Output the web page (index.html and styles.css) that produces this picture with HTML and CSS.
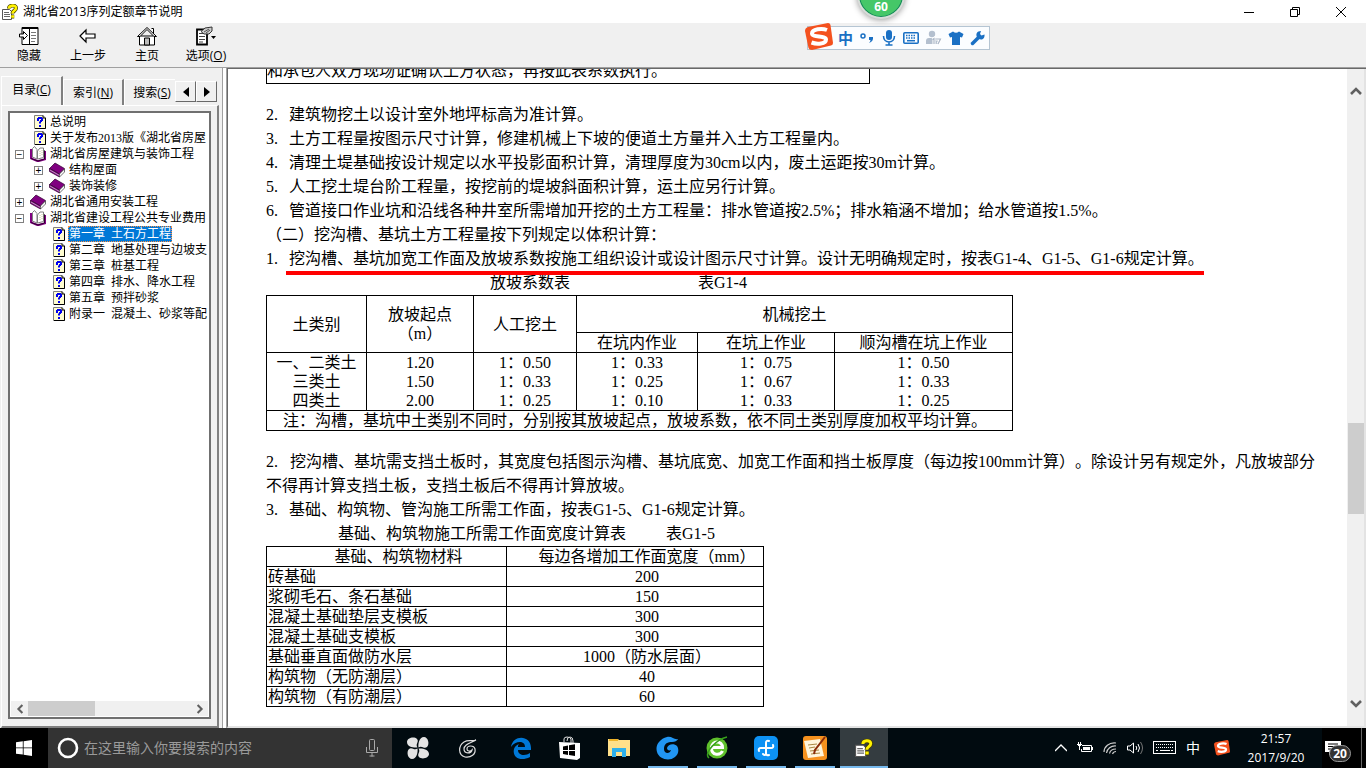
FILE: index.html
```html
<!DOCTYPE html>
<html lang="zh-CN">
<head>
<meta charset="utf-8">
<title>湖北省2013序列定额章节说明</title>
<link rel="stylesheet" href="styles.css">
</head>
<body>
<svg class="sprite" aria-hidden="true">
  <symbol id="topic" viewBox="0 0 12 16">
    <path d="M.5 1.500h8.500l2.500 2.500v10.500H.5z" fill="#fffdd0" stroke="#808080"/>
    <path d="M1 14.500h10.500V4H9V1.500" fill="none" stroke="#000"/>
    <path d="M3 4h2v3H3zM4 3h4v2H4zM7 4h2v3H7zM6 6h2v2H6zM5 7.500h2v2H5zM5 11h2v2H5z" fill="#0000f0"/>
  </symbol>
  <symbol id="book-open" viewBox="0 0 16 16">
    <path d="M0 3h2.500v9L8 14l6-1.500V5H16v9l-7 2H7l-7-3z" fill="#800080"/>
    <path d="M2.500 2.500L4.500.5 7 3.500V13L2.500 11z" fill="#fff" stroke="#808080"/>
    <path d="M7.500 13V5L10 2h3.500v9.500z" fill="#fff" stroke="#808080"/>
    <path d="M14.500 4v9L8 15 1 12.500" fill="none" stroke="#000" stroke-width=".6"/>
    <path d="M10 5v6M12 4v6" stroke="#cc9" stroke-dasharray="1 1"/>
  </symbol>
  <symbol id="book-closed" viewBox="0 0 16 16">
    <path d="M.5 6.500L6 1l9.500 5.500-5 5.500z" fill="#800080" stroke="#300030" stroke-width=".7"/>
    <path d="M.5 6.500v3l10 5.500V12z" fill="#800080" stroke="#300030" stroke-width=".7"/>
    <path d="M10.500 12l5-5v3l-5 5z" fill="#fff" stroke="#333" stroke-width=".7"/>
    <path d="M1 8l9.500 5.500" stroke="#ddd" stroke-width=".7" fill="none"/>
  </symbol>
  <symbol id="help-doc" viewBox="0 0 16 16">
    <path d="M.5 5.500h7l2 2v8h-9z" fill="#fff" stroke="#555"/>
    <path d="M2 8.500h5M2 10.500h6M2 12.500h6" stroke="#666"/>
    <path d="M7 4.500C7 1 14 .5 14 4c0 3-3.500 2.500-3.500 5.500M9.200 12.500h3" fill="none" stroke="#443d00" stroke-width="4"/>
    <path d="M7 4.500C7 1 14 .5 14 4c0 3-3.500 2.500-3.500 5.500M9.200 12.500h3" fill="none" stroke="#fff200" stroke-width="2.600"/>
  </symbol>
  <symbol id="sogou" viewBox="0 0 28 28">
    <path d="M3 4L23 0q2 0 2.500 2l2.500 18q0 2-2 2.500L7 27q-3 0-3.500-2L0 8q0-3 3-4z" fill="#f4511e"/>
    <path d="M22 7c-5-2-15-1-15 3.500 0 4 14 2 14 6 0 4.500-9 5-14.500 3" fill="none" stroke="#fff" stroke-width="4"/>
  </symbol>
  <symbol id="chev" viewBox="0 0 12 10"><path d="M1 8l5-5 5 5" fill="none" stroke="#606060" stroke-width="2.600"/></symbol>
</svg>

<header class="titlebar">
  <svg class="i16"><use href="#help-doc"/></svg>
  <h1>湖北省2013序列定额章节说明</h1>
  <div class="winctl">
    <button aria-label="最小化"><svg viewBox="0 0 10 10"><path d="M0 5.500h10" stroke="#000"/></svg></button>
    <button aria-label="还原"><svg viewBox="0 0 10 10"><path d="M.5 2.500h7v7h-7zM2.500 2.500v-2h7v7h-2" stroke="#000" fill="none"/></svg></button>
    <button aria-label="关闭"><svg viewBox="0 0 10 10"><path d="M0 0l10 10M10 0L0 10" stroke="#000"/></svg></button>
  </div>
</header>

<nav class="toolbar">
  <button>
    <svg class="tool-icon" viewBox="0 0 20 20"><path d="M3 1.500h16v17H3z" fill="#fff" stroke="#000"/><path d="M3 2.500h16M10.500 2v16" stroke="#000"/><path d="M12 6.500h5M12 9.500h5M12 12.500h5M12 15.500h4" stroke="#777"/><path d="M8.500 9.500l-4-4V8H.5v3h4v2.500z" fill="#fff" stroke="#000"/></svg>
    <span>隐藏</span>
  </button>
  <button>
    <svg class="tool-icon" viewBox="0 0 20 20"><path d="M2 10l6-6v4h9v4H8v4z" fill="#fff" stroke="#000" stroke-width="1.200"/></svg>
    <span>上一步</span>
  </button>
  <button>
    <svg class="tool-icon" viewBox="0 0 20 20"><path d="M2.500 10h15v9h-15zM14.500 2.500h2V8" fill="#fff" stroke="#000"/><path d="M.5 10.500L10 1.500l9.500 9H17l-7-7-7 7z" fill="#fff" stroke="#000"/><path d="M7.500 19v-7h5v7z" fill="#bbb" stroke="#000"/></svg>
    <span>主页</span>
  </button>
  <button>
    <svg class="tool-icon" viewBox="0 0 20 20"><path d="M1 3.500h10v15H1z" fill="#fff" stroke="#000" stroke-width="1.800"/><path d="M3 7.500h5M3 10.500h6M3 13.500h6M3 16h4" stroke="#444"/><path d="M5 5.500L9 2l7-1v4l-3 3H8z" fill="#ccc" stroke="#333"/><path d="M8 6l5-3M10 7l4-3" stroke="#333" stroke-width=".8"/><path d="M15 10h5l-2.500 3z" fill="#000"/></svg>
    <span>选项(<u>O</u>)</span>
  </button>
</nav>

<div class="ball">60</div>
<div class="ime">
  <svg class="ime-logo"><use href="#sogou"/></svg>
  <button>中</button>
  <button aria-label="标点"><svg viewBox="0 0 16 16"><circle cx="4" cy="6" r="2" fill="none" stroke="#1a70c4" stroke-width="1.500"/><path d="M10 7h4c.5 3-1 5-4 6 1-1 1.500-2 1.500-3H10z" fill="#1a70c4"/></svg></button>
  <button aria-label="语音"><svg viewBox="0 0 16 16"><rect x="5" y="0" width="6" height="10" rx="3" fill="#1a70c4"/><path d="M2.500 6c0 8 11 8 11 0M8 12v3M4.500 15h7" fill="none" stroke="#1a70c4" stroke-width="1.600"/></svg></button>
  <button aria-label="软键盘"><svg viewBox="0 0 16 16"><rect x=".8" y="2.800" width="14.400" height="10.400" rx="1" fill="none" stroke="#1a70c4" stroke-width="1.600"/><path d="M3 5.500h10M3 8h10" stroke="#1a70c4" stroke-width="1.500" stroke-dasharray="1.500 1"/><path d="M4 10.700h8" stroke="#1a70c4" stroke-width="1.500"/></svg></button>
  <button aria-label="账户"><svg viewBox="0 0 16 16"><circle cx="6" cy="4" r="3.200" fill="#b4c0cf"/><path d="M0 14V11q0-3 3-3h6q3 0 3 3v3z" fill="#b4c0cf"/><path d="M6.500 9.500L8 8.500V14M10 9h4.500L12 14" fill="none" stroke="#fff" stroke-width="3"/><path d="M6.500 9.500L8 8.500V14M10 9h4.500L12 14" fill="none" stroke="#aab6c6" stroke-width="1.200"/></svg></button>
  <button aria-label="皮肤"><svg viewBox="0 0 16 16"><path d="M5 1.500q3 2.500 6 0L15.500 4 14 7.500l-2-.5v8H4V7l-2 .5L.5 4z" fill="#1a70c4"/></svg></button>
  <button aria-label="工具"><svg viewBox="0 0 16 16"><path d="M2.500 13.500L9 7" stroke="#1a70c4" stroke-width="3.500" stroke-linecap="round"/><path d="M14.500 4.500l-3 1-1.500-1.500 1-3c-4 0-5.500 3-4 6l2 2c3 1.500 6-.5 5.500-4.500z" fill="#1a70c4"/></svg></button>
</div>

<main class="workspace">
  <aside class="side">
    <div class="tabs" role="tablist">
      <button role="tab" aria-selected="true" class="tab on">目录(<u>C</u>)</button>
      <button role="tab" class="tab">索引(<u>N</u>)</button>
      <button role="tab" class="tab last">搜索(<u>S</u>)</button>
      <button class="spin" aria-label="向左"><svg viewBox="0 0 6 10"><path d="M6 0v10L0 5z"/></svg></button>
      <button class="spin" aria-label="向右"><svg viewBox="0 0 6 10"><path d="M0 0v10l6-5z"/></svg></button>
    </div>
    <div class="sheet">
      <div class="treebox">
        <ul class="tree">
          <li class="leaf"><svg class="page"><use href="#topic"/></svg><a href="#t">总说明</a></li>
          <li class="leaf"><svg class="page"><use href="#topic"/></svg><a href="#t">关于发布2013版《湖北省房屋</a></li>
          <li><button class="exp" aria-label="折叠">−</button><svg class="i16"><use href="#book-open"/></svg><a href="#t">湖北省房屋建筑与装饰工程</a></li>
          <li class="sub"><button class="exp" aria-label="展开">+</button><svg class="i16"><use href="#book-closed"/></svg><a href="#t">结构屋面</a></li>
          <li class="sub"><button class="exp" aria-label="展开">+</button><svg class="i16"><use href="#book-closed"/></svg><a href="#t">装饰装修</a></li>
          <li><button class="exp" aria-label="展开">+</button><svg class="i16"><use href="#book-closed"/></svg><a href="#t">湖北省通用安装工程</a></li>
          <li><button class="exp" aria-label="折叠">−</button><svg class="i16"><use href="#book-open"/></svg><a href="#t">湖北省建设工程公共专业费用</a></li>
          <li class="sub leaf"><svg class="page"><use href="#topic"/></svg><a href="#t" class="sel">第一章&nbsp; 土石方工程</a></li>
          <li class="sub leaf"><svg class="page"><use href="#topic"/></svg><a href="#t">第二章&nbsp; 地基处理与边坡支</a></li>
          <li class="sub leaf"><svg class="page"><use href="#topic"/></svg><a href="#t">第三章&nbsp; 桩基工程</a></li>
          <li class="sub leaf"><svg class="page"><use href="#topic"/></svg><a href="#t">第四章&nbsp; 排水、降水工程</a></li>
          <li class="sub leaf"><svg class="page"><use href="#topic"/></svg><a href="#t">第五章&nbsp; 预拌砂浆</a></li>
          <li class="sub leaf"><svg class="page"><use href="#topic"/></svg><a href="#t">附录一&nbsp; 混凝土、砂浆等配</a></li>
        </ul>
        <div class="hbar">
          <button aria-label="向左滚动"><svg class="west"><use href="#chev"/></svg></button>
          <div class="track"><div class="thumb"></div></div>
          <button aria-label="向右滚动"><svg class="east"><use href="#chev"/></svg></button>
        </div>
      </div>
    </div>
  </aside>
  <div class="splitter"></div>
  <section class="view">
    <article class="doc">
      <table class="prev"><tr><td>和承包人双方现场证确认土方状态，再按此表系数执行。</td></tr></table>
      <p class="item"><span class="no">2.</span><span>建筑物挖土以设计室外地坪标高为准计算。</span></p>
      <p class="item"><span class="no">3.</span><span>土方工程量按图示尺寸计算，修建机械上下坡的便道土方量并入土方工程量内。</span></p>
      <p class="item"><span class="no">4.</span><span>清理土堤基础按设计规定以水平投影面积计算，清理厚度为30cm以内，废土运距按30m计算。</span></p>
      <p class="item"><span class="no">5.</span><span>人工挖土堤台阶工程量，按挖前的堤坡斜面积计算，运土应另行计算。</span></p>
      <p class="item"><span class="no">6.</span><span>管道接口作业坑和沿线各种井室所需增加开挖的土方工程量：排水管道按2.5%；排水箱涵不增加；给水管道按1.5%。</span></p>
      <p>（二）挖沟槽、基坑土方工程量按下列规定以体积计算：</p>
      <p class="item"><span class="no">1.</span><span class="marked">挖沟槽、基坑加宽工作面及放坡系数按施工组织设计或设计图示尺寸计算。设计无明确规定时，按表G1-4、G1-5、G1-6规定计算。</span></p>
      <p class="cap cap-a"><span>放坡系数表</span><span>表G1-4</span></p>
      <table class="grid slope">
        <colgroup><col class="a"><col class="b"><col class="c"><col class="d"><col class="e"><col class="f"></colgroup>
        <tr class="h1"><th rowspan="2">土类别</th><th rowspan="2">放坡起点<br>（m）</th><th rowspan="2">人工挖土</th><th colspan="3">机械挖土</th></tr>
        <tr><th>在坑内作业</th><th>在坑上作业</th><th>顺沟槽在坑上作业</th></tr>
        <tr class="vals"><td>一、二类土<br>三类土<br>四类土</td><td>1.20<br>1.50<br>2.00</td><td>1：0.50<br>1：0.33<br>1：0.25</td><td>1：0.33<br>1：0.25<br>1：0.10</td><td>1：0.75<br>1：0.67<br>1：0.33</td><td>1：0.50<br>1：0.33<br>1：0.25</td></tr>
        <tr><td colspan="6" class="note">注：沟槽，基坑中土类别不同时，分别按其放坡起点，放坡系数，依不同土类别厚度加权平均计算。</td></tr>
      </table>
      <p class="after">2.&nbsp;&nbsp; 挖沟槽、基坑需支挡土板时，其宽度包括图示沟槽、基坑底宽、加宽工作面和挡土板厚度（每边按100mm计算）。除设计另有规定外，凡放坡部分不得再计算支挡土板，支挡土板后不得再计算放坡。</p>
      <p class="item"><span class="no">3.</span><span>基础、构筑物、管沟施工所需工作面，按表G1-5、G1-6规定计算。</span></p>
      <p class="cap cap-b"><span>基础、构筑物施工所需工作面宽度计算表</span><span>表G1-5</span></p>
      <table class="grid width">
        <colgroup><col class="g"><col class="h"></colgroup>
        <tr><th>基础、构筑物材料</th><th>每边各增加工作面宽度（mm）</th></tr>
        <tr><td>砖基础</td><td>200</td></tr>
        <tr><td>浆砌毛石、条石基础</td><td>150</td></tr>
        <tr><td>混凝土基础垫层支模板</td><td>300</td></tr>
        <tr><td>混凝土基础支模板</td><td>300</td></tr>
        <tr><td>基础垂直面做防水层</td><td>1000（防水层面）</td></tr>
        <tr><td>构筑物（无防潮层）</td><td>40</td></tr>
        <tr><td>构筑物（有防潮层）</td><td>60</td></tr>
      </table>
    </article>
    <div class="vbar">
      <button aria-label="向上滚动"><svg><use href="#chev"/></svg></button>
      <div class="vtrack"><div class="vthumb"></div></div>
      <button aria-label="向下滚动"><svg class="south"><use href="#chev"/></svg></button>
    </div>
  </section>
</main>

<footer class="taskbar">
  <button class="start" aria-label="开始"><svg viewBox="0 0 16 16"><path d="M0 2.300L6.800 1.300v6.200H0zM7.600 1.200L16 0v7.500H7.600zM0 8.300h6.800v6.300L0 13.700zM7.600 8.300H16V16l-8.400-1.200z" fill="#fff"/></svg></button>
  <label class="search">
    <svg class="ring" viewBox="0 0 22 22"><circle cx="11" cy="11" r="9" fill="none" stroke="#fff" stroke-width="2.600"/></svg>
    <input type="text" placeholder="在这里输入你要搜索的内容" aria-label="搜索">
    <svg class="mic" viewBox="0 0 12 18"><rect x="3.500" y=".5" width="5" height="11" rx="1" fill="none" stroke="#aaa"/><path d="M.5 8v5.500h11V8M6 14v3.500M3.500 17h5" fill="none" stroke="#aaa"/></svg>
  </label>
  <div class="apps">
    <button aria-label="应用"><svg viewBox="0 0 24 24"><g fill="#e4e4e4"><path d="M11.500 11.500C8 12 1 11 1 6c0-4 7-6 10-3 2.500 3-2 5 .5 8.500z"/><path d="M12.500 11.500C12 8 13 1 18 1c4 0 6 7 3 10-3 2.500-5-2-8.500.5z"/><path d="M12.500 12.500C16 12 23 13 23 18c0 4-7 6-10 3-2.500-3 2-5-.5-8.500z"/><path d="M11.500 12.500C12 16 11 23 6 23c-4 0-6-7-3-10 3-2.500 5 2 8.500-.5z"/></g></svg></button>
    <button aria-label="浏览器"><svg viewBox="0 0 24 24"><path d="M21 4c-4 2-7-1-12 2-6 4-6 13 1 15 6 1 11-3 10-8-1-4-8-4-8 0 0 2 3 3 5 1-1 4-8 4-8-1 0-5 7-6 12-9z" fill="none" stroke="#ddd" stroke-width="1.200"/></svg></button>
    <button class="gap" aria-label="Edge"><svg viewBox="0 0 24 24"><path d="M2 11C4-2 22-1 22 12v2H9c0 6 8 6 12 3v4C11 26 3 21 5 13c1-3 3-4 5-5-1 1-1 2-1 3h7c0-7-10-6-14 0z" fill="#0078d7"/></svg></button>
    <button aria-label="商店"><svg viewBox="0 0 24 24"><path d="M6 6V3q0-2 3-2t4 2v4M9 5q0-4 3-4t3 4v2" fill="none" stroke="#ddd"/><path d="M1 6l21 1v15l-3 2-17-2z" fill="#fff"/><path d="M5 10.500l5-1V14H5zM11 9.300l6-1V14h-6zM5 15h5v4l-5-1zM11 15h6v5l-6-1z" fill="#000"/></svg></button>
    <button aria-label="资源管理器"><svg viewBox="0 0 24 24"><path d="M1 3h10l1 1h11v16H1z" fill="#ffe08a"/><path d="M2 3h9v2H2z" fill="#f0b429"/><path d="M5 21v-9h14v9h-4v-5H9v5z" fill="#2fb0ea"/></svg></button>
    <button class="run" aria-label="下载"><svg viewBox="0 0 24 24"><path d="M22 3c-4 1-6-3-11-2C3 3-1 10 1 16c2 7 12 10 18 5 4-3 4-8 2-11-3-3-9-2-10 2 0 2 2 3 4 2-1 4-7 4-7-1C8 7 12 6 16 6c3 0 5-1 6-3z" fill="#2196f3"/></svg></button>
    <button class="run" aria-label="浏览器"><svg viewBox="0 0 24 24"><circle cx="12" cy="12" r="10.500" fill="#5fc02c"/><path d="M5 11.500h12.500C17.500 4 6.500 4 6.500 12s9 7.500 11 3" fill="none" stroke="#fff" stroke-width="3"/><path d="M4 22C-2 17 12 3 22 1" fill="none" stroke="#37a01c" stroke-width="1.500"/></svg></button>
    <button class="run" aria-label="应用"><svg viewBox="0 0 24 24"><rect width="24" height="24" rx="5" fill="#0d92f4"/><path d="M12 18V7q0-3 3-2M12 18q-1 2-3 0M12 12H7q-3 0-2 3M7 12h10q3 0 2-3M12 18q1 2 3 1" fill="none" stroke="#fff" stroke-width="2" stroke-linecap="round"/></svg></button>
    <button class="run" aria-label="便笺"><svg viewBox="0 0 24 24"><rect width="24" height="24" rx="3" fill="#f6921e"/><path d="M1 5l16-2 4 17-16 2z" fill="#fff6dd"/><path d="M5 9l9-1M6 12l6-1M7 15l9-1M8 18l9-1" stroke="#a84"/><path d="M22 1L12 14l-1 4" fill="none" stroke="#8a2c0a" stroke-width="2"/></svg></button>
    <button class="run active" aria-label="帮助"><svg><use href="#help-doc"/></svg></button>
  </div>
  <div class="tray">
    <svg class="t1" viewBox="0 0 12 16"><path d="M0 11l6-6 6 6" fill="none" stroke="#fff" stroke-width="1.300"/></svg>
    <svg class="t2" viewBox="0 0 16 16"><path d="M5 5.500h9.500v6H4.500V9M15.500 7v3" fill="none" stroke="#fff"/><path d="M6 7h7v3H6z" fill="#fff"/><path d="M1.500 2v2M3.500 2v2M0 4.500h5M1 5.500h3M2.500 6v4" stroke="#fff"/></svg>
    <svg class="t3" viewBox="0 0 14 16"><path d="M1 12C1 7 6 2 13 3M3.500 13C4 9 8 5.500 13 6M6.500 13.500C7 11 9 9 13 9M9.500 14q1-2.500 3.500-2.500" fill="none" stroke="#ccc" stroke-width="1.200"/></svg>
    <svg class="t4" viewBox="0 0 16 16"><path d="M.5 6h2.500L6.500 3v10L3 10H.5z" fill="none" stroke="#fff"/><path d="M9 6q1.500 2 0 4M11 4q3 4 0 8" fill="none" stroke="#fff"/><path d="M13.500 2q4 6 0 12" fill="none" stroke="#777"/></svg>
    <svg class="t5" viewBox="0 0 23 16"><rect x=".5" y="1.500" width="22" height="12" fill="none" stroke="#fff"/><path d="M3 4.500h17M3 7.500h17" stroke="#fff" stroke-dasharray="1 1"/><path d="M3 10.500h2M7 10.500h10M18 10.500h2" stroke="#fff"/></svg>
    <span class="lang">中</span>
    <svg class="i16"><use href="#sogou"/></svg>
  </div>
  <div class="clock"><time>21:57</time><time>2017/9/20</time></div>
  <button class="notes" aria-label="操作中心"><svg viewBox="0 0 16 16"><path d="M0 1h16v11H7l-3 3v-3H0z" fill="#fff"/><path d="M3 4h10M3 6.500h10M3 9h7" stroke="#000"/></svg><span class="badge">20</span></button>
  <button class="desk" aria-label="显示桌面"></button>
</footer>
</body>
</html>
```
FILE: styles.css
```css
* { box-sizing: border-box; }
html { height: 100%; }
body {
  display: flex;
  flex-direction: column;
  position: relative;
  height: 100%;
  margin: 0;
  overflow: hidden;
  background: #f0f0f0;
  color: #000;
  font: 12px/16px "Open Sans", "Noto Sans CJK SC", sans-serif;
  text-spacing-trim: space-all;
}
button {
  margin: 0;
  padding: 0;
  border: 0;
  background: none;
  color: inherit;
  font: inherit;
}
p { margin: 0; }
svg { display: block; flex: none; }
.sprite { position: absolute; width: 0; height: 0; }
.i16 { width: 16px; height: 16px; }

/* title bar */
.titlebar {
  display: flex;
  flex: none;
  align-items: center;
  height: 23px;
  padding: 0 2px;
  gap: 5px;
  background: #fff;
}
.titlebar h1 { flex: 1; margin: 0; font-size: 12px; font-weight: 400; }
.winctl { display: flex; }
.winctl button { display: grid; place-items: center; width: 46px; height: 20px; }
.winctl svg { width: 10px; height: 10px; }

/* toolbar */
.toolbar { display: flex; flex: none; height: 44px; }
.toolbar button {
  display: flex;
  flex-direction: column;
  align-items: center;
  width: 59px;
  padding-top: 3px;
  padding-right: 1px;
  gap: 2px;
}
.tool-icon { width: 20px; height: 20px; }

/* floating widgets */
.ball {
  position: absolute;
  top: -29px;
  left: 857px;
  width: 48px;
  height: 48px;
  padding-top: 26px;
  border: 2px solid #d8dcd9;
  border-radius: 50%;
  background: #45c768;
  box-shadow: inset 0 0 0 1px #14855c, 0 1px 6px #999;
  color: #fff;
  font-size: 12px;
  font-weight: 700;
  text-align: center;
}
.ime {
  position: absolute;
  top: 26px;
  left: 807px;
  display: flex;
  align-items: center;
  justify-content: space-between;
  width: 183px;
  height: 24px;
  padding: 0 3px 0 30px;
  border: 1px solid #b5c5d3;
  background: #fbfdff;
  color: #1a70c4;
}
.ime-logo { position: absolute; top: -4px; left: -3px; width: 28px; height: 28px; }
.ime button { font-size: 15px; font-weight: 700; }
.ime button svg { width: 16px; height: 16px; }

/* panes */
.workspace {
  display: flex;
  flex: 1;
  min-height: 0;
  border-top: 1px solid #a0a0a0;
}
.side { display: flex; flex: none; flex-direction: column; width: 219px; padding: 8px 0 0 1px; }
.tabs { display: flex; flex: none; align-items: flex-end; height: 29px; }
.tab {
  height: 26px;
  width: 61px;
  border-top: 1px solid #fff;
  border-left: 1px solid #fff;
  border-right: 2px solid #808080;
}
.tab.on { width: 62px; height: 29px; padding-bottom: 3px; }
.tab.last { width: 51px; padding-left: 4px; border-right: 0; }
.spin {
  display: grid;
  place-items: center;
  width: 21px;
  height: 21px;
  margin-bottom: 3px;
  border: 1px solid;
  border-color: #fff #696969 #696969 #fff;
}
.spin svg { width: 6px; height: 10px; }
.sheet {
  display: flex;
  flex: 1;
  min-height: 0;
  padding: 5px 6px 7px;
  border: 1px solid #fff;
  border-right: 2px solid #808080;
  border-bottom: 2px solid #808080;
}
.treebox {
  display: flex;
  flex: 1;
  flex-direction: column;
  min-width: 0;
  padding: 1px;
  border: 2px solid #707070;
  background: #fff;
}
.tree {
  flex: 1;
  margin: 0;
  padding: 0;
  overflow: hidden;
  list-style: none;
  font-family: "Liberation Serif", "Noto Sans CJK SC", serif;
}
.tree li { display: flex; align-items: center; height: 16px; padding-left: 4px; white-space: nowrap; }
.tree li.sub { padding-left: 23px; }
.tree li.leaf { padding-left: 23px; }
.tree li.sub.leaf { padding-left: 42px; }
.tree .page { width: 12px; height: 16px; margin-right: 3px; }
.tree .i16 { margin: 0 3px 0 6px; }
.tree a { padding: 0 1px; color: #000; text-decoration: none; }
.tree a.sel { outline: 1px dotted #ff9040; outline-offset: -1px; background: #0078d7; color: #fff; }
.exp {
  display: grid;
  place-items: center;
  width: 9px;
  height: 9px;
  border: 1px solid #808080;
  font: 10px/7px "Liberation Sans", sans-serif;
}
.hbar { display: flex; flex: none; height: 15px; background: #f0f0f0; }
.hbar button { display: grid; place-items: center; width: 17px; }
.vbar svg { width: 12px; height: 10px; }
.hbar svg { width: 10px; height: 8px; }
.west { transform: rotate(-90deg); }
.east { transform: rotate(90deg); }
.south { transform: rotate(180deg); }
.track { flex: 1; }
.thumb { width: 41%; height: 100%; background: #cdcdcd; }
.splitter {
  flex: none;
  width: 5px;
  margin-left: 3px;
  border-left: 1px solid #a0a0a0;
  border-right: 1px solid #a0a0a0;
  background: #fff;
}
.view {
  display: flex;
  flex: 1;
  min-width: 0;
  border-top: 1px solid #696969;
  border-left: 1px solid #696969;
  border-bottom: 2px solid #e3e3e3;
  background: #fff;
}
.vbar { display: flex; flex: none; flex-direction: column; width: 19px; background: #f0f0f0; border-right: 2px solid #e3e3e3; }
.vbar button { display: grid; place-items: center; height: 44px; }
.vtrack { flex: 1; }
.vthumb { width: 16px; height: 91px; margin: 310px auto 0 1px; background: #cdcdcd; }

/* document */
.doc {
  flex: 1;
  min-width: 0;
  padding: 0 25px 0 38px;
  overflow: hidden;
  font: 16px/24px "Liberation Serif", "Noto Sans CJK SC", serif;
}
.prev {
  width: 604px;
  margin: -11px 0 19px;
  border: 1px solid #000;
  border-spacing: 0;
}
.prev td { padding: 0; }
.no { width: 23px; }
.item { display: flex; white-space: nowrap; }
.marked { position: relative; }
.marked::after {
  content: "";
  position: absolute;
  right: 0;
  bottom: -4px;
  left: -3px;
  height: 4px;
  background: #f00;
}
.cap { display: flex; }
.cap-a { gap: 128px; padding-left: 224px; }
.cap-b { gap: 40px; padding-left: 72px; }
.grid {
  table-layout: fixed;
  border-collapse: collapse;
  line-height: 19px;
  text-align: center;
}
.grid th, .grid td { height: 20px; padding: 0; border: 1px solid #000; font-weight: 400; white-space: nowrap; }
.slope { width: 747px; }
.slope .h1 { height: 37px; }
.a { width: 100px; }
.b { width: 107px; }
.c { width: 103px; }
.d { width: 121px; }
.e { width: 137px; }
.f { width: 178px; }
.grid .note { padding-left: 16px; text-align: left; }
.after { margin-top: 19px; }
.width { width: 498px; }
.g { width: 240px; }
.h { width: 257px; }
.width th, .width td + td { padding-left: 24px; }
.width td { text-align: left; padding-left: 1px; }
.width td + td { text-align: center; }

/* taskbar */
.taskbar { display: flex; flex: none; height: 40px; background: #010b10; color: #fff; }
.start { display: grid; place-items: center; width: 48px; background: #000; }
.start svg { width: 16px; height: 16px; }
.search { display: flex; align-items: center; width: 344px; padding: 0 14px 0 9px; gap: 5px; background: #333; }
.ring { width: 22px; height: 22px; }
.mic { width: 12px; height: 18px; }
.search input {
  flex: 1;
  min-width: 0;
  padding: 0;
  border: 0;
  outline: 0;
  background: none;
  color: #fff;
  font: 14px/20px "Open Sans", "Noto Sans CJK SC", sans-serif;
}
.search input::placeholder { color: #9a9a9a; }
.apps { display: flex; flex: 1; padding-left: 2px; gap: 1px; }
.apps button { display: grid; place-items: center; width: 48px; }
.apps svg { width: 24px; height: 24px; }
.apps .gap { margin-left: 5px; }
.apps .run { background: linear-gradient(#76b9ed, #76b9ed) bottom / 40px 2px no-repeat; }
.apps .active { background: linear-gradient(#76b9ed, #76b9ed) bottom / 48px 2px no-repeat #343c40; }
.apps .active svg { width: 18px; height: 18px; }
.tray { display: flex; align-items: center; gap: 10px; }
.tray .t1 { width: 12px; height: 16px; }
.tray .t2, .tray .t4 { width: 16px; height: 16px; }
.tray .t3 { width: 14px; height: 16px; }
.tray .t5 { width: 23px; height: 16px; }
.lang { font-size: 14px; }
.tray .i16 { margin-left: 4px; }
.clock { display: flex; flex-direction: column; justify-content: center; width: 92px; line-height: 19px; text-align: center; }
.notes { position: relative; width: 39px; padding-left: 3px; background: #000; }
.notes svg { width: 16px; height: 16px; }
.badge {
  position: absolute;
  top: 17px;
  left: 7px;
  width: 22px;
  height: 17px;
  border: 1px solid #999;
  border-radius: 9px;
  background: #333;
  font: 700 12px/15px "Open Sans", sans-serif;
  text-align: center;
}
.desk { width: 5px; border-left: 1px solid #666; background: #000; }
```
